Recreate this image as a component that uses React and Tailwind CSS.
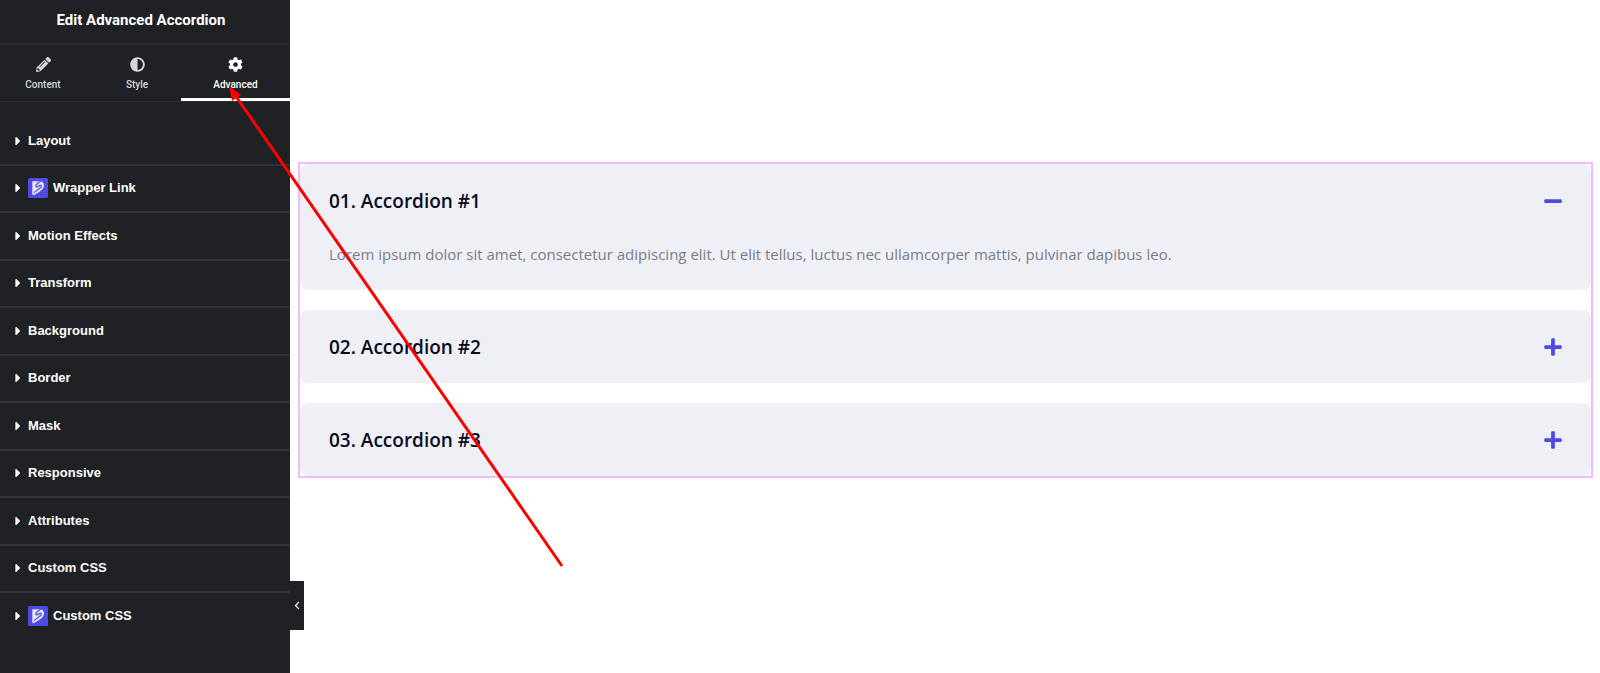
import { useState } from 'react';
import { FaCog, FaPencilAlt, FaAdjust, FaCaretRight, FaChevronLeft, FaPlus, FaMinus } from 'react-icons/fa';

const TABS = [
  { name: 'Content', icon: FaPencilAlt, width: 'w-[93px] pr-[7px]' },
  { name: 'Style', icon: FaAdjust, width: 'flex-1' },
  { name: 'Advanced', icon: FaCog, width: 'w-[109px]' },
];

const SECTIONS = [
  { title: 'Layout' },
  { title: 'Wrapper Link', badge: true },
  { title: 'Motion Effects' },
  { title: 'Transform' },
  { title: 'Background' },
  { title: 'Border' },
  { title: 'Mask' },
  { title: 'Responsive' },
  { title: 'Attributes' },
  { title: 'Custom CSS' },
  { title: 'Custom CSS', badge: true },
];

const ITEMS = ['01. Accordion #1', '02. Accordion #2', '03. Accordion #3'];
const LOREM = 'Lorem ipsum dolor sit amet, consectetur adipiscing elit. Ut elit tellus, luctus nec ullamcorper mattis, pulvinar dapibus leo.';

function BrandBadge() {
  return (
    <svg viewBox="0 0 20 20" className="h-5 w-5 shrink-0" aria-hidden="true">
      <rect width="20" height="20" rx="1.500" fill="#4d4be2" />
      <path d="M4.300 3.200H12c2.400 0 3.900 1.800 3.900 4.100 0 3.200-2.600 5.200-4.800 6.600L5.600 17.200l-1.300-.8z" fill="#e8e8fd" />
      <path d="M12.800 3 8.600 6.200C7 7.600 7.800 9.300 9.500 8.600l2.300-1.200c1.400-.6 2.200.8 1.100 1.800L6 14.600" fill="none" stroke="#4d4be2" strokeWidth="1.200" />
    </svg>
  );
}

function Panel() {
  const [tab, setTab] = useState('Advanced');

  return (
    <aside className="relative w-[290px] shrink-0 bg-[#1f2124] text-white">
      <header className="flex h-[45px] items-center justify-center border-b-2 border-[#2b2d31] pr-2 pb-1">
        <h1 className="font-[Roboto,sans-serif] text-[15px] leading-5 font-bold">Edit Advanced Accordion</h1>
      </header>
      <nav className="flex h-[57px] border-b border-[#2f3136]">
        {TABS.map(({ name, icon: Icon, width }) => (
          <button
            key={name}
            type="button"
            onClick={() => setTab(name)}
            className={`${width} flex flex-col items-center gap-[5px] border-b-3 pt-3 font-[Roboto,sans-serif] text-[10px] leading-4 font-medium ${
              tab === name ? 'border-white text-white' : 'border-transparent text-[#d5d8dc]'
            }`}
          >
            <Icon className="h-[15px] w-[15px]" />
            {name}
          </button>
        ))}
      </nav>
      <ul className="pt-4">
        {SECTIONS.map((s, i) => (
          <li key={i} className="odd:h-12 even:h-[47px] border-b-2 border-[#33353a] last:border-transparent">
            <button type="button" className="flex h-full w-full items-center pb-px pl-3 text-left text-[13px] leading-5 font-bold">
              <FaCaretRight className="mr-1 h-[14px] w-3" />
              {s.badge && <span className="mr-[5px]"><BrandBadge /></span>}
              {s.title}
            </button>
          </li>
        ))}
      </ul>
      <button
        type="button"
        aria-label="Hide panel"
        className="absolute bottom-[43px] left-full flex h-[49px] w-[14px] items-center justify-center bg-[#1f2124] text-[#e6e8ea]"
      >
        <FaChevronLeft className="h-[9px] w-2" />
      </button>
    </aside>
  );
}

function Accordion() {
  const [open, setOpen] = useState(0);

  return (
    <section className="flex flex-col gap-5 border-2 border-[#f3bafd] font-['Open_Sans',sans-serif]">
      {ITEMS.map((title, i) => (
        <div key={title} className="rounded-lg bg-[#eff0f6]">
          <button
            type="button"
            aria-expanded={open === i}
            onClick={() => setOpen(open === i ? -1 : i)}
            className="flex h-[73px] w-full items-center justify-between pr-7 pl-[29px] text-left text-[19px] leading-7 font-semibold text-[#080b22]"
          >
            {title}
            {open === i
              ? <FaMinus className="h-5 w-5 text-[#4d4be2]" />
              : <FaPlus className="h-5 w-5 text-[#4d4be2]" />}
          </button>
          {open === i && (
            <p className="px-[29px] pt-[5px] pb-[23px] text-[15px] leading-[25px] text-[#7a7c8b]">{LOREM}</p>
          )}
        </div>
      ))}
    </section>
  );
}

// Red pointer laid over the editor, from the canvas up to the Advanced tab
function Pointer() {
  return (
    <svg className="pointer-events-none absolute top-[86px] left-[229px]" width="336" height="484" aria-hidden="true">
      <path d="M6 9 333 480" stroke="#fe0000" strokeWidth="3" />
      <path d="M0 0 3 15 12 9z" fill="#fe0000" />
    </svg>
  );
}

export default function App() {
  return (
    <div className="relative flex min-h-screen bg-white font-['Liberation_Sans',Arial,sans-serif]">
      <Panel />
      <main className="min-w-0 flex-1 pt-[162px] pr-[7px] pl-2">
        <Accordion />
      </main>
      <Pointer />
    </div>
  );
}
